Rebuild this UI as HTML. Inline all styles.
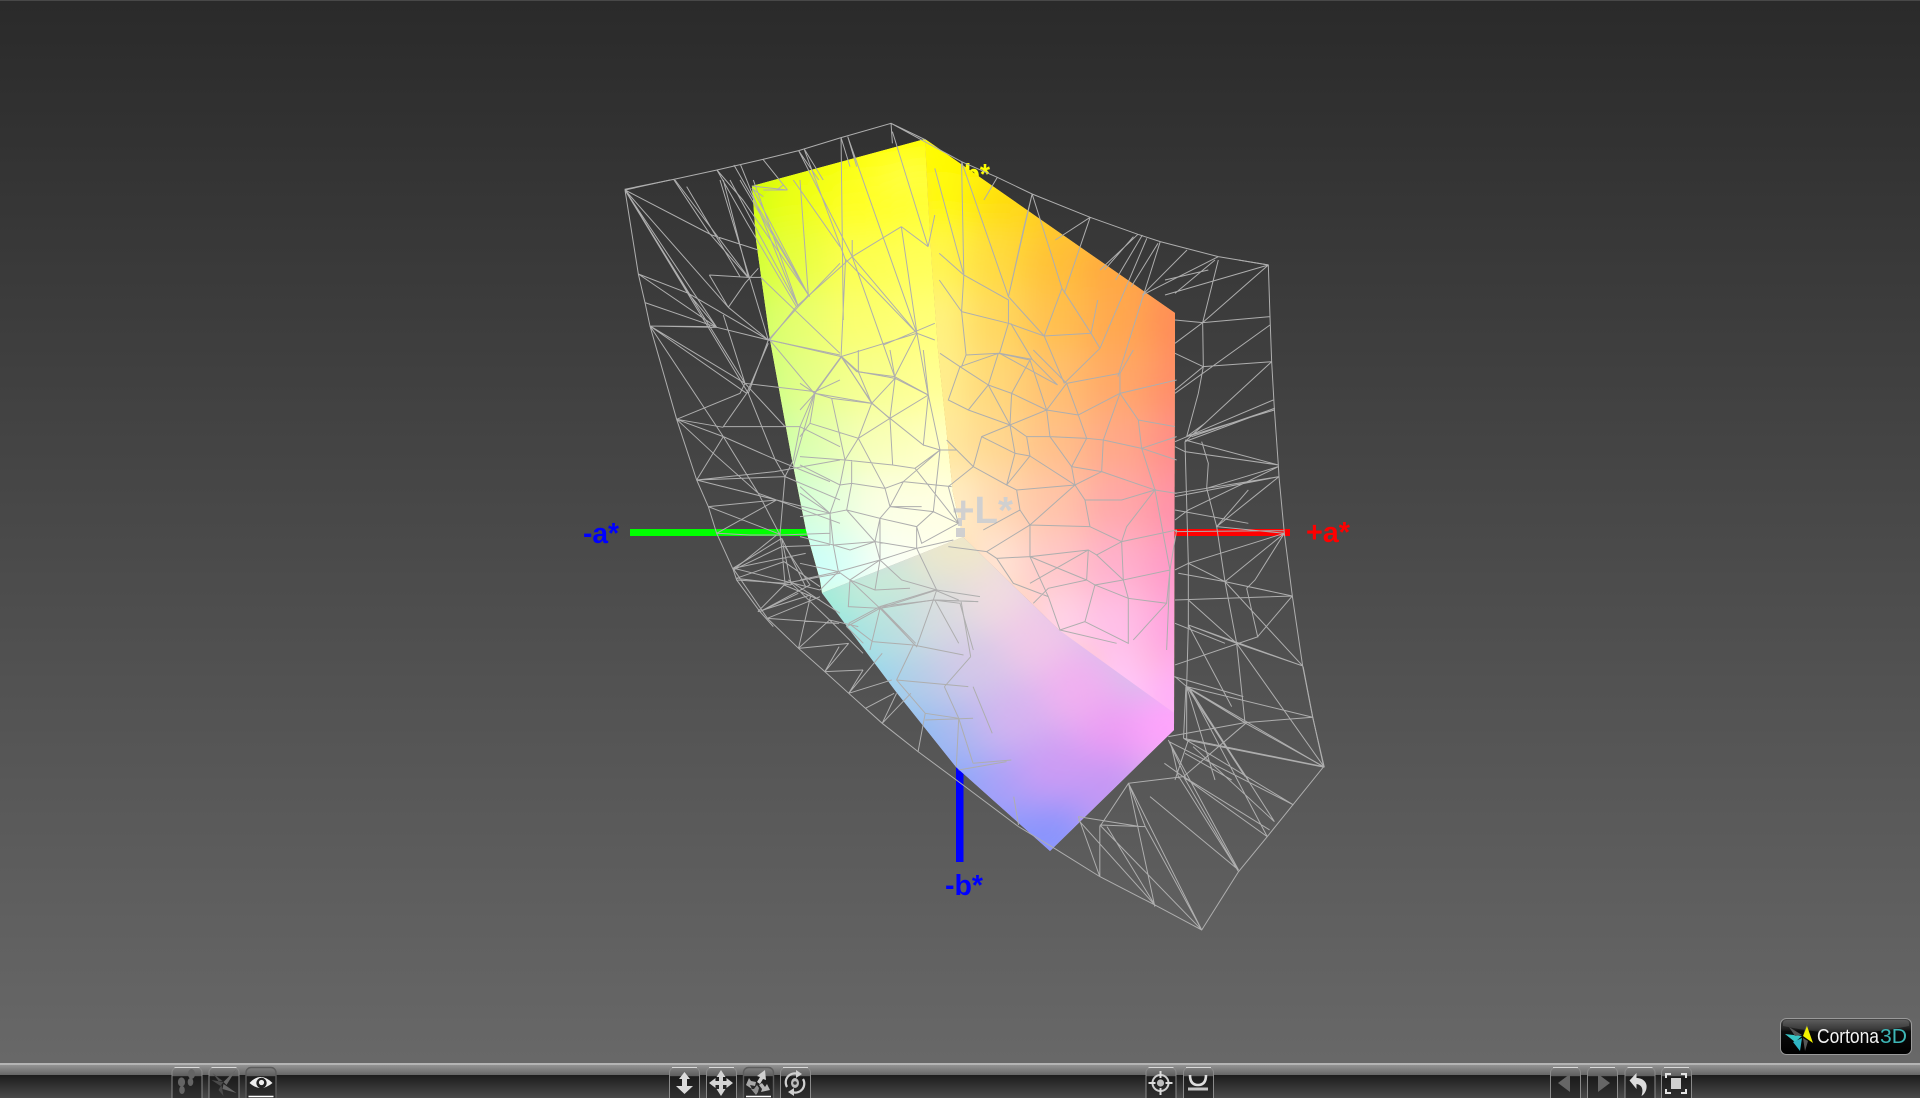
<!DOCTYPE html>
<html><head><meta charset="utf-8"><title>Cortona3D gamut view</title>
<style>
html,body{margin:0;padding:0;width:1920px;height:1098px;overflow:hidden;background:#444}
svg{display:block}
text{font-family:"Liberation Sans",sans-serif}
g[filter] circle{r:40px}
</style></head>
<body>
<svg xmlns="http://www.w3.org/2000/svg" width="1920" height="1098" viewBox="0 0 1920 1098">
<defs>
<linearGradient id="bg" x1="0" y1="0" x2="0" y2="1"><stop offset="0" stop-color="#2a2a2a"/><stop offset="1" stop-color="#686868"/></linearGradient>
<linearGradient id="barT" x1="0" y1="0" x2="0" y2="1"><stop offset="0" stop-color="#939393"/><stop offset="1" stop-color="#666"/></linearGradient>
<linearGradient id="barB" x1="0" y1="0" x2="0" y2="1"><stop offset="0" stop-color="#1c1c1c"/><stop offset="1" stop-color="#4a4a4a"/></linearGradient>
<linearGradient id="btn" x1="0" y1="0" x2="0" y2="1">
<stop offset="0" stop-color="#808080"/><stop offset=".24" stop-color="#5e5e5e"/><stop offset=".245" stop-color="#1b1b1b"/><stop offset="1" stop-color="#363636"/></linearGradient>
<linearGradient id="logo" x1="0" y1="0" x2="0" y2="1"><stop offset="0" stop-color="#4a4a4a"/><stop offset=".3" stop-color="#1c1c1c"/><stop offset=".36" stop-color="#0a0a0a"/><stop offset="1" stop-color="#000"/></linearGradient>
<clipPath id="cU"><path d="M752 186 925 139 928 200 932 267 938 350 953 493 963 537 822 593 820 580 806 530 792 460 770 340 756 240Z"/></clipPath>
<clipPath id="cR"><path d="M925 139 1175 313 1174 730 1059 630 997 570 963 537 953 493 938 350 932 267 928 200Z"/></clipPath>
<clipPath id="cL"><path d="M822 593 963 537 997 570 1059 630 1174 713 1174 730 1050 851 956 767 897 693Z"/></clipPath>
<filter id="b1" filterUnits="userSpaceOnUse" x="600" y="50" width="700" height="900"><feGaussianBlur stdDeviation="18"/></filter>
<g id="bt"><rect x=".5" y=".5" width="30" height="36" rx="5" fill="url(#btn)" stroke="#8a8a8a"/><path d="M3 .5H28" stroke="#d8d8d8" fill="none"/></g>
<g id="ba"><rect x=".5" y=".5" width="30" height="36" rx="5" fill="url(#btn)" stroke="#5c5c5c" stroke-width="1.4"/><path d="M3 29.5H28" stroke="#fff" stroke-width="1.4" fill="none"/></g>
</defs>

<rect width="1920" height="1064" fill="url(#bg)"/>
<rect width="1920" height="1" fill="#484848"/>

<!-- axes behind -->
<rect x="630" y="529" width="180" height="7" fill="#00ff00"/>
<rect x="1170" y="529" width="120" height="7" fill="#ff0000"/>
<rect x="956" y="764" width="7.5" height="98" fill="#0000ff"/>
<text x="964" y="184" font-size="29" font-weight="bold" fill="#ffff00" textLength="26" lengthAdjust="spacingAndGlyphs">b*</text>

<!-- solid faces -->
<g clip-path="url(#cU)"><rect x="740" y="130" width="240" height="480" fill="#ffff80"/>
<g filter="url(#b1)">
<circle cx="760" cy="150" r="34" fill="#d0f800"/><circle cx="820" cy="150" r="34" fill="#f2ff00"/><circle cx="880" cy="130" r="34" fill="#ffff00"/><circle cx="945" cy="130" r="34" fill="#ffff00"/>
<circle cx="735" cy="210" r="34" fill="#c8ff08"/><circle cx="800" cy="210" r="34" fill="#ecff18"/><circle cx="860" cy="210" r="34" fill="#ffff20"/><circle cx="925" cy="210" r="34" fill="#ffff30"/>
<circle cx="740" cy="270" r="34" fill="#c8ff30"/><circle cx="800" cy="270" r="34" fill="#e6ff40"/><circle cx="860" cy="270" r="34" fill="#fcff50"/><circle cx="925" cy="270" r="34" fill="#ffff58"/>
<circle cx="745" cy="330" r="34" fill="#c6ff60"/><circle cx="805" cy="330" r="34" fill="#e4ff70"/><circle cx="860" cy="330" r="34" fill="#faff70"/><circle cx="925" cy="330" r="34" fill="#ffff78"/>
<circle cx="755" cy="390" r="34" fill="#c2ff80"/><circle cx="815" cy="390" r="34" fill="#e4ff88"/><circle cx="870" cy="390" r="34" fill="#f6ff90"/><circle cx="935" cy="390" r="34" fill="#ffff94"/>
<circle cx="765" cy="450" r="34" fill="#c0ffa4"/><circle cx="825" cy="450" r="34" fill="#e0ffb0"/><circle cx="880" cy="450" r="34" fill="#f8ffb8"/><circle cx="945" cy="450" r="34" fill="#ffffc4"/>
<circle cx="780" cy="510" r="34" fill="#bfffd0"/><circle cx="835" cy="510" r="34" fill="#e0ffdc"/><circle cx="890" cy="510" r="34" fill="#fcffe4"/><circle cx="950" cy="510" r="34" fill="#ffffe4"/>
<circle cx="795" cy="575" r="34" fill="#bcffff"/><circle cx="845" cy="575" r="34" fill="#d4fff8"/><circle cx="900" cy="575" r="34" fill="#fafff8"/><circle cx="950" cy="575" r="34" fill="#fffff0"/>
</g></g>
<g clip-path="url(#cR)"><rect x="920" y="130" width="265" height="610" fill="#ffc878"/>
<g filter="url(#b1)">
<circle cx="930" cy="140" r="34" fill="#ffff00"/><circle cx="985" cy="150" r="34" fill="#fff400"/>
<circle cx="940" cy="210" r="34" fill="#fffa10"/><circle cx="1010" cy="210" r="34" fill="#ffdc10"/><circle cx="1070" cy="210" r="34" fill="#ffc828"/>
<circle cx="940" cy="270" r="34" fill="#fff850"/><circle cx="1000" cy="270" r="34" fill="#ffdc40"/><circle cx="1060" cy="270" r="34" fill="#ffc038"/><circle cx="1120" cy="270" r="34" fill="#ffa840"/><circle cx="1185" cy="280" r="34" fill="#ff9450"/>
<circle cx="940" cy="330" r="34" fill="#fff480"/><circle cx="1000" cy="330" r="34" fill="#ffd860"/><circle cx="1060" cy="330" r="34" fill="#ffc050"/><circle cx="1120" cy="330" r="34" fill="#ffa850"/><circle cx="1185" cy="330" r="34" fill="#ff8c58"/>
<circle cx="945" cy="390" r="34" fill="#fff090"/><circle cx="1000" cy="390" r="34" fill="#ffd878"/><circle cx="1060" cy="390" r="34" fill="#ffc070"/><circle cx="1120" cy="390" r="34" fill="#ffa868"/><circle cx="1185" cy="390" r="34" fill="#ff8c68"/>
<circle cx="950" cy="450" r="34" fill="#ffeca0"/><circle cx="1000" cy="450" r="34" fill="#ffd890"/><circle cx="1060" cy="450" r="34" fill="#ffc088"/><circle cx="1120" cy="450" r="34" fill="#ffa888"/><circle cx="1185" cy="450" r="34" fill="#ff8c88"/>
<circle cx="960" cy="510" r="34" fill="#fff0c8"/><circle cx="1010" cy="510" r="34" fill="#ffd8b0"/><circle cx="1060" cy="510" r="34" fill="#ffc4a8"/><circle cx="1120" cy="510" r="34" fill="#ffa8a8"/><circle cx="1185" cy="510" r="34" fill="#ff90a8"/>
<circle cx="1000" cy="570" r="34" fill="#ffe4d4"/><circle cx="1060" cy="570" r="34" fill="#ffc8c8"/><circle cx="1120" cy="570" r="34" fill="#ffb0cc"/><circle cx="1185" cy="570" r="34" fill="#ff98c8"/>
<circle cx="1060" cy="630" r="34" fill="#ffd4e8"/><circle cx="1120" cy="630" r="34" fill="#ffc0e8"/><circle cx="1185" cy="630" r="34" fill="#ffa0e0"/>
<circle cx="1120" cy="695" r="34" fill="#ffc8fa"/><circle cx="1185" cy="695" r="34" fill="#ffaef8"/><circle cx="1185" cy="750" r="34" fill="#ffb0ff"/>
</g></g>
<g clip-path="url(#cL)"><rect x="810" y="530" width="375" height="330" fill="#d8c0ec"/>
<g filter="url(#b1)">
<circle cx="822" cy="600" r="28" fill="#9ceed8"/><circle cx="880" cy="590" r="28" fill="#c8ecd8"/><circle cx="940" cy="545" r="28" fill="#e8e8d0"/><circle cx="975" cy="540" r="28" fill="#efe8c8"/>
<circle cx="850" cy="650" r="28" fill="#94e4e4"/><circle cx="900" cy="640" r="28" fill="#b8e0e0"/><circle cx="950" cy="620" r="28" fill="#d8dce0"/><circle cx="1005" cy="600" r="28" fill="#f0dce0"/>
<circle cx="880" cy="700" r="28" fill="#8cd4f0"/><circle cx="930" cy="690" r="28" fill="#b4cce8"/><circle cx="980" cy="670" r="28" fill="#d4c8e8"/><circle cx="1040" cy="640" r="28" fill="#f0c8e8"/>
<circle cx="920" cy="750" r="28" fill="#84bcf4"/><circle cx="970" cy="740" r="28" fill="#acb8f0"/><circle cx="1020" cy="720" r="28" fill="#d4b4f0"/><circle cx="1080" cy="690" r="28" fill="#f0b0f0"/>
<circle cx="960" cy="800" r="28" fill="#80a8fc"/><circle cx="1010" cy="790" r="28" fill="#a8a0f8"/><circle cx="1060" cy="770" r="28" fill="#cc9cf4"/><circle cx="1120" cy="740" r="28" fill="#ec9cf4"/><circle cx="1175" cy="725" r="28" fill="#ffa4fc"/>
<circle cx="1110" cy="795" r="28" fill="#c498f4"/><circle cx="1010" cy="855" r="28" fill="#8098ff"/><circle cx="1055" cy="840" r="28" fill="#8a94fc"/>
</g></g>

<!-- grey +L* -->
<rect x="956" y="528" width="9" height="9" fill="#d0d0d0"/><rect x="958" y="518" width="4" height="8" fill="#d0d0d0"/>
<text x="952" y="523" font-size="38" font-weight="bold" fill="#d0d0d0" textLength="61" lengthAdjust="spacingAndGlyphs">+L*</text>

<!-- wireframe: top area -->
<g transform="translate(600 100) scale(.4464 .3333)" fill="none" stroke="#aeaeae"><path vector-effect="non-scaling-stroke" d="M55 268 165 238 262 210 365 178 445 152 540 113 652 70 810 185 890 232 968 282 1098 352 1205 403 1255 425 1385 470 1498 495
M652 70 655 130M540 113 560 200M555 110 575 200M445 152 490 240M458 148 500 240M652 70 730 120
M262 210 330 370 440 620M262 210 320 300 470 590M300 195 465 580M315 195 440 610M365 178 420 270M340 258 420 270M165 238 245 400 330 530
M445 152 565 470M458 150 550 480M540 113 545 660M555 110 710 700M655 95 735 440M750 205 815 525M810 185 915 590M750 345 735 440M760 460 815 525M760 540 810 635M810 190 815 525
M675 380 565 470 440 620 380 720M675 380 735 440M675 380 710 700M565 420 565 470 660 830M550 478 540 770M550 478 710 700M565 470 710 700
M380 720 540 770 710 700 750 720M540 770 575 815 660 830 735 885M380 720 480 880 610 910 648 955M540 770 480 880M540 770 610 910M710 700 660 830M710 700 735 885M750 670 635 735
M810 635 820 765 810 800M810 635 915 670 895 760M815 525 810 635M815 525 915 600 915 670 995 708 1100 700 1120 745 1040 850M915 590 995 708M1100 700 1115 600M1035 565 1100 700M1035 565 995 708M915 590 968 282M890 232 860 300M968 282 950 380 915 590M968 282 1035 565M1098 352 1020 420M1098 352 1040 580M1205 403 1120 510M1215 405 1155 540M1225 415 1120 745M1255 425 1160 830M1315 450 1215 585M1385 470 1215 585M1250 430 1190 560M1195 410 1130 510
M820 765 895 760 968 778M895 760 1025 855M995 708 1040 850M968 778 1025 855M968 778 920 670"/></g>

<!-- wireframe: left band (crop 620,180) -->
<g transform="translate(620 180) scale(.3333)" fill="none" stroke="#aeaeae"><path vector-effect="non-scaling-stroke" d="M15 30 55 282 75 368 90 438 170 718 230 900 265 980 290 1060 340 1170 350 1200 420 1295 460 1340
M15 30 150 0M15 30 325 382M15 30 290 442M15 30 385 640M15 30 375 610M15 30 205 340 290 442M15 30 275 165 415 210M165 0 385 292M200 20 360 290M300 0 445 480M310 0 385 292M330 0 535 380M360 0 565 345M400 0 535 380M400 30 565 345M540 0 565 345M520 0 660 200
M55 282 290 442M55 282 205 340 445 480M75 368 290 442 445 480M90 438 290 442M90 438 375 610M90 438 380 640M90 438 310 770M90 438 270 440
M268 285 385 292 420 292M268 285 325 382 375 310 415 265M325 382 445 480M310 405 375 610 495 740M375 610 585 635M385 640 465 838M385 640 445 480M380 640 310 740 540 740 585 635M170 718 360 640 375 610M170 718 310 742M170 718 310 770 465 838M170 718 280 820 415 940 480 1065M310 770 230 900M310 770 415 940M230 900 465 875 660 840M230 900 495 890M230 900 470 960M265 980 470 960 630 1000M265 980 485 1065M290 1060 470 960M290 1060 390 1065 480 1065 630 1060M340 1170 485 1100 630 1095M340 1170 470 1065M350 1200 495 1210 660 1180M420 1295 570 1215 495 1100M420 1295 535 1240M445 490 380 640M540 740 520 840 495 890 480 1065 485 1100 495 1210M465 838 495 890M465 838 630 905M585 635 520 860M660 525 445 480M660 250 535 380 445 480M565 345 535 380M420 290 660 520M445 480 660 525M540 740 660 800M585 635 660 600M495 890 660 960M415 940 660 1030M630 1000 630 1090M500 30 430 30M430 50 395 25M470 30 490 15M505 1200 660 1300"/></g>

<!-- wireframe: right band (crop 1165,260) -->
<g transform="translate(1165 260) scale(.3333)" fill="none" stroke="#aeaeae"><path vector-effect="non-scaling-stroke" d="M310 15 315 170 320 305 328 445 340 615 342 650 358 820 382 1008 413 1218 443 1372 478 1522
M310 15 113 188 30 250M310 15 0 105M220 0 310 15M315 170 113 188 30 180M315 195 30 400M320 305 115 320 30 390M320 305 60 545M328 445 60 545M328 450 65 530 120 490M325 420 30 545M330 445 80 530M340 615 60 575 30 560M340 620 125 685 30 700M342 650 125 685M342 650 30 710M358 820 155 800 250 690M342 650 155 800M358 820 70 910 30 930M358 820 270 960 245 985M358 820 180 965M358 812 30 815M382 1008 180 965 70 910M382 1008 30 1020M382 1008 278 1130M413 1218 70 1095M413 1218 215 1150 70 1095M413 1218 180 965M443 1372 65 1280M443 1372 240 1388 10 1430M478 1522 65 1280M478 1522 65 1440M478 1522 215 1150 70 1020
M113 188 115 320 100 400 65 530M110 545 130 610 125 685 155 800 180 965 215 1150 240 1388M245 985 278 1130M60 545 70 910 70 1010 70 1095 65 1280 65 1440M60 540 340 615M65 1280 240 1388M65 1280 240 1550M65 1280 150 1560M65 1280 250 1560M30 1215 280 1130M70 1095 200 1340M30 280 115 320M150 0 30 100M0 60 130 30M30 750 250 790M30 780 70 750 340 620M40 940 180 965M30 1090 180 1150M30 1250 65 1280M10 1440 65 1560M30 1560 70 1440M60 1480 200 1560M113 188 160 0"/></g>

<!-- wireframe: central mesh (crop 800,350) -->
<g transform="translate(800 350) scale(.3333)" fill="none" stroke="#aeaeae"><path vector-effect="non-scaling-stroke" d="M125 20 45 130 0 100M125 20 175 65 285 85 215 160 175 65M125 20 215 160 270 205 285 85M45 130 95 145 215 160M45 130 30 220 175 265 135 330 0 320M95 145 135 330M175 265 215 160M175 265 270 205 278 345 135 330M270 205 370 285 385 135 285 85M385 135 270 205M385 135 420 300 345 355 278 345M370 0 385 135M270 0 285 85M175 0 175 65M370 285 420 300 310 395 270 470 240 505 225 575M420 300 400 485 475 520 345 355M420 300 470 300M135 330 120 405 90 490 100 585 115 665 240 630 225 575 100 585M155 330 155 400 140 480 90 490M0 345 120 405 155 400 255 415 310 395 455 410M0 410 90 490M140 480 225 575 150 600 100 585M140 480 240 505 270 470 255 415 175 265M240 505 350 530 400 485 270 470 365 470M350 530 365 580 475 520M350 530 350 595 240 630 305 690 410 720 350 595M225 575 350 595 460 570M240 505 240 630M115 665 0 690M115 665 150 690 240 775 410 720 400 750 240 775M150 690 145 770 240 775 350 890 400 750 480 760 520 900M410 720 540 740M400 750 535 755M240 775 140 830 190 880M240 775 210 900M150 690 225 720 330 715M240 630 225 720M100 585 0 560M0 640 115 665M115 665 60 720M240 630 150 690M0 430 90 490M0 500 90 490M30 220 0 260M45 130 0 180
M480 50 445 150 505 180 565 105 480 50 420 10M565 105 595 10 690 30 635 130 565 105M480 50 595 10M635 130 740 180 690 30M505 180 630 225 740 180 800 100 700 0M565 105 630 225M635 130 630 225M800 100 835 195 740 180M800 100 960 70 1000 0M960 70 960 130 835 195 860 265 910 270 960 130 1130 90M960 130 1015 210 1125 230M1015 210 1025 295 910 270M630 225 545 260 520 350 620 405 645 310 630 225 680 260 750 260 740 180M545 260 645 310 690 318 680 260M690 318 620 405 650 420 825 405 690 318M750 260 815 350 825 405 905 365 815 350 860 265 750 260M910 270 905 365 1065 420 1025 295 1130 260M825 405 855 450 870 530 965 575 890 615 865 600 690 620 690 525 870 530M855 450 965 450 1065 420 980 530 965 575 1130 540M660 480 690 525 560 605 445 590M650 420 660 480 550 540M520 350 445 410 475 520M520 350 440 270M825 405 690 525M690 620 590 625 560 605M690 620 745 740 780 840 855 815 885 705 860 690 745 715 700 760M590 625 640 700 745 740M865 600 690 700M865 600 860 690M890 615 970 690 1110 660 1130 540M970 690 985 745 1100 760 1110 660M965 575 970 690 885 705 985 745 985 880 855 815M1100 760 1000 870M1065 420 1110 660M1065 420 1130 430M780 840 950 880M690 620 860 690M910 270 1025 295 1130 330M1110 660 1100 900"/></g>

<!-- wireframe: lower area -->
<g transform="translate(600 480) scale(.4783 .3333)" fill="none" stroke="#aeaeae"><path vector-effect="non-scaling-stroke" d="M278 265 350 415 415 505 470 575 520 640 590 730 665 815 745 900 875 1040 950 1105 1045 1190 1160 1275 1258 1350 1335 1175 1395 1070 1513 860 1490 710 1470 560
M278 265 380 175M278 265 430 220M285 295 400 315M285 295 385 245M330 395 440 345M350 415 460 350M350 415 500 430M415 505 520 490M415 505 440 350M470 575 550 570M470 575 520 490M520 640 590 520M520 640 550 570M555 685 615 640M590 730 650 640M665 815 680 700M380 175 400 315M380 175 430 320M385 245 460 320M280 265 460 330M330 395 385 315 460 360M400 310 480 420 550 520M415 505 480 420 540 440M470 575 500 500M520 640 610 600M590 730 620 640
M585 380 700 330M585 380 700 360 790 365M700 330 750 360M585 380 655 490M585 380 520 430M755 365 775 530M570 485 655 495 760 525M655 495 620 600M775 530 720 620M620 600 770 620M620 600 680 700 750 715M720 620 750 715M780 620 820 760M750 715 780 850M680 720 780 715M750 715 745 860M780 850 860 840M750 870 850 845M865 950 875 1035M585 380 660 490M520 430 570 485M700 360 750 490
M1200 590 1345 650M1225 620 1350 730 1513 860M1230 620 1410 1025M1230 620 1395 1070M1225 620 1220 775M1350 730 1220 890 1400 1050M1220 890 1105 910 1140 1040 1045 1035M1190 785 1335 1170M1190 785 1450 975M1220 775 1450 975M1220 775 1513 860M1220 890 1335 1175M1195 800 1210 895M1105 910 1045 1040 1045 1190M1105 910 1160 1280M1140 1040 1258 1350M1045 1035 1258 1350M1180 850 1395 1070M1335 1175 1210 890M1000 1010 1130 1040M1000 1010 1045 1190M1000 1020 1160 1275M1105 910 1258 1350M1060 1040 1160 1275M1150 950 1335 1170M1240 800 1410 1025"/></g>

<!-- axis labels -->
<text x="583" y="543" font-size="29" font-weight="bold" fill="#0000ff" textLength="36" lengthAdjust="spacingAndGlyphs">-a*</text>
<text x="1306" y="542" font-size="29" font-weight="bold" fill="#ff0000" textLength="44" lengthAdjust="spacingAndGlyphs">+a*</text>
<text x="945" y="895" font-size="29" font-weight="bold" fill="#0000ff" textLength="38" lengthAdjust="spacingAndGlyphs">-b*</text>

<!-- logo -->
<g transform="translate(1780 1018)">
<rect x=".5" y=".5" width="131" height="36" rx="6" fill="url(#logo)" stroke="#9a9a9a"/>
<path d="M3 8Q66 22 129 8V5Q129 2 125 2H7Q3 2 3 5Z" fill="#fff" opacity=".13"/>
<path d="M23 17 27 9 28 3Z" fill="#585858"/><path d="M23 18 33 25 27 8Z" fill="#f2f200"/>
<path d="M22 18 5 16 15 24Z" fill="#38c4c4"/><path d="M22 20 13 24 20 33Z" fill="#2fb4c4"/><path d="M23 20 25 33 28 23Z" fill="#555"/><path d="M22 17 9 9 15 18Z" fill="#555"/>
<text x="37" y="25" font-size="20" fill="#f4f4f4" textLength="62" lengthAdjust="spacingAndGlyphs">Cortona</text>
<text x="100" y="25" font-size="20" fill="#3db6b6" textLength="27" lengthAdjust="spacingAndGlyphs">3D</text>
</g>

<!-- toolbar -->
<rect y="1063" width="1920" height="2" fill="#b4b4b4"/>
<rect y="1065" width="1920" height="10" fill="url(#barT)"/>
<rect y="1075" width="1920" height="23" fill="url(#barB)"/>

<g transform="translate(171.5 1067)"><use href="#bt"/><g fill="#646464"><ellipse cx="20" cy="7" rx="3.6" ry="5"/><ellipse cx="19" cy="15" rx="2.8" ry="4"/><ellipse cx="10" cy="15" rx="3.6" ry="4.6"/><ellipse cx="10.500" cy="23" rx="2.800" ry="4"/></g></g>
<g transform="translate(208.5 1067)"><use href="#bt"/><g fill="#686868"><path d="M15 15 28 2 18 18Z"/><path d="M3 13 15 15 12 19Z" fill="#4a4a4a"/><path d="M15 17 28 26 14 22Z"/><path d="M13 18 15 29 10 23Z" fill="#4a4a4a"/><path d="M4 6 14 14 10 14Z" fill="#505050"/></g></g>
<g transform="translate(245.5 1067)"><use href="#ba"/><path d="M4 16Q15 4 27 16Q15 26 4 16Z" fill="#eee"/><circle cx="16" cy="16" r="5.200" fill="#222"/><circle cx="16" cy="15.500" r="2.600" fill="#eee"/></g>

<g transform="translate(669 1067)"><use href="#bt"/><path d="M15.500 5 21 12H18V19H24L15.500 27 7 19H13V12H10Z" fill="#dcdcdc"/></g>
<g transform="translate(706 1067)"><use href="#bt"/><path d="M15 3 19.500 10H17V14H20.500V11L27 16 20.500 21V18H17V22H19.500L15 29 10.500 22H13V18H9.500V21L3 16 9.500 11V14H13V10H10.500Z" fill="#d4d4d4"/></g>
<g transform="translate(743 1067)"><use href="#ba"/><g fill="#cfcfcf"><path d="M22 3 23 13 20 12 17 17 14 15 17 10 14 9Z"/><path d="M3 18 6 11 8 14 13 15 12 19 7 18 9 22Z" fill="#a8a8a8"/><path d="M27 23 18 25 19 22 16 18 19 16 22 20 24 17Z" fill="#b8b8b8"/><path d="M13 28 8 22 11 22 14 18 16 21 15 25Z" fill="#909090"/></g></g>
<g transform="translate(780 1067)"><use href="#bt"/><g fill="none" stroke="#d0d0d0" stroke-width="2.200"><path d="M7 20A9 9 0 0 1 18 7"/><path d="M23 12A9 9 0 0 1 12 25"/></g><path d="M16 3 22 7 16 11Z" fill="#d0d0d0"/><path d="M14 21 8 25 14 29Z" fill="#d0d0d0"/><ellipse cx="15" cy="16" rx="4" ry="5" fill="#bdbdbd"/><circle cx="15" cy="16" r="1.800" fill="#333"/></g>

<g transform="translate(1145.5 1067)"><use href="#bt"/><circle cx="15" cy="16" r="8" fill="none" stroke="#cfcfcf" stroke-width="2"/><circle cx="15" cy="16" r="3.600" fill="#bdbdbd"/><path d="M15 4V11M15 21V28M3 16H10M20 16H27" stroke="#dcdcdc" stroke-width="2"/></g>
<g transform="translate(1183 1067)"><use href="#bt"/><path d="M7 8C7 15 10 18 15 18S23 15 23 8" fill="none" stroke="#dedede" stroke-width="2.600"/><rect x="5" y="20.500" width="20" height="3" fill="#c4c4c4"/></g>

<g transform="translate(1550 1067)"><use href="#bt"/><path d="M8 16 20 7V25Z" fill="#666"/></g>
<g transform="translate(1587 1067)"><use href="#bt"/><path d="M23 16 11 7V25Z" fill="#666"/></g>
<g transform="translate(1624.5 1067)"><use href="#bt"/><path d="M12 6V11C19 11 23 16 22 21 21.500 25 19 28 17 29 19 23 18 18 12 17V22L5 13.500Z" fill="#dcdcdc"/></g>
<g transform="translate(1661 1067)"><use href="#bt"/><rect x="10" y="11" width="10" height="11" fill="#cfcfcf"/><path d="M5 11V7H10M20 7H25V11M25 22V26H20M10 26H5V22" fill="none" stroke="#e4e4e4" stroke-width="2"/></g>
</svg>
</body></html>
